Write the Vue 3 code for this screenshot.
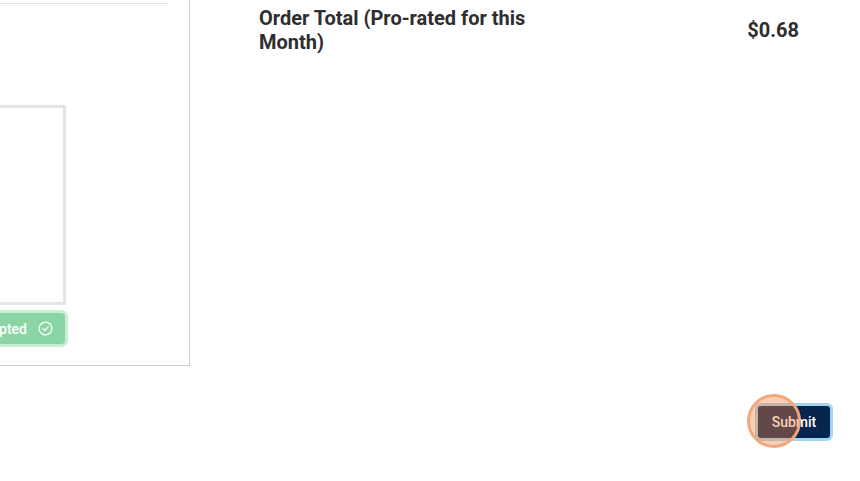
<template>
  <div class="page">
    <div class="top-row">
      <!-- left card, scrolled partly out of view -->
      <section class="agreement-card">
        <div class="divider"></div>
        <div class="signature-box"></div>
        <button class="accepted-btn">
          Accepted
          <svg class="check-icon" viewBox="0 0 16 16" width="15" height="15" fill="none" stroke="#fff" stroke-width="1.3">
            <circle cx="8" cy="8" r="6.8" />
            <path d="M5.2 8.2 7.2 10.2 10.8 6.2" stroke-linecap="round" stroke-linejoin="round" />
          </svg>
        </button>
      </section>

      <div class="order-total">
        <div class="total-label">Order Total (Pro-rated for this Month)</div>
        <div class="total-price">$0.68</div>
      </div>
    </div>

    <div class="actions">
      <div class="submit-wrap">
        <button class="submit-btn">Submit</button>
        <span class="click-mark"></span>
      </div>
    </div>
  </div>
</template>

<script setup>
</script>

<style>
html,
body {
  margin: 0;
  background: #fff;
  overflow: hidden;
}
</style>

<style scoped>
.page {
  width: 860px;
  height: 481px;
  overflow: hidden;
  font-family: Roboto, "Liberation Sans", sans-serif;
  color: #2e2e2e;
  background: #fff;
}

.top-row {
  display: flex;
  align-items: flex-start;
}

.agreement-card {
  box-sizing: border-box;
  flex: none;
  width: 500px;
  height: 400px;
  margin-left: -310px;
  margin-top: -34px;
  padding: 36px 20px 0 20px;
  border: 1px solid #cfcfcf;
  display: flex;
  flex-direction: column;
  align-items: flex-end;
}

.divider {
  width: 100%;
  height: 1px;
  background: #e3e3e3;
}

.signature-box {
  box-sizing: border-box;
  width: 420px;
  height: 200px;
  margin-top: 101px;
  margin-right: 103px;
  border: 3px solid #e4e4e4;
}

.accepted-btn {
  box-sizing: content-box;
  width: 160px;
  height: 31px;
  margin-top: 8px;
  margin-right: 104px;
  padding: 0 12px 0 0;
  border: none;
  border-radius: 4px;
  background: #8bd5a4;
  box-shadow: 0 0 0 3px #c8eed5;
  color: #fff;
  font-family: inherit;
  font-size: 14px;
  font-weight: 500;
  display: flex;
  align-items: center;
  justify-content: flex-end;
  gap: 11px;
}

.check-icon {
  display: block;
}

.order-total {
  flex: 1;
  display: flex;
  align-items: center;
  justify-content: space-between;
  margin-left: 69px;
  padding-right: 61px;
  font-size: 20px;
  font-weight: 700;
  line-height: 24px;
  padding-top: 6px;
}

.total-label {
  width: 300px;
}

.total-price {
  font-size: 20px;
}

.actions {
  display: flex;
  justify-content: flex-end;
  padding-right: 30px;
  margin-top: 40px;
}

.submit-wrap {
  position: relative;
}

.submit-btn {
  display: block;
  width: 72px;
  height: 32px;
  padding: 0;
  border: none;
  border-radius: 3px;
  background: #07264f;
  box-shadow: 0 0 0 3px #a5d6ef;
  color: #fff;
  font-family: inherit;
  font-size: 14px;
  font-weight: 500;
}

.click-mark {
  position: absolute;
  left: -11px;
  top: -12px;
  box-sizing: border-box;
  width: 54px;
  height: 54px;
  border-radius: 50%;
  border: 3px solid #f3a77c;
  background: rgba(248, 130, 60, 0.38);
}
</style>
